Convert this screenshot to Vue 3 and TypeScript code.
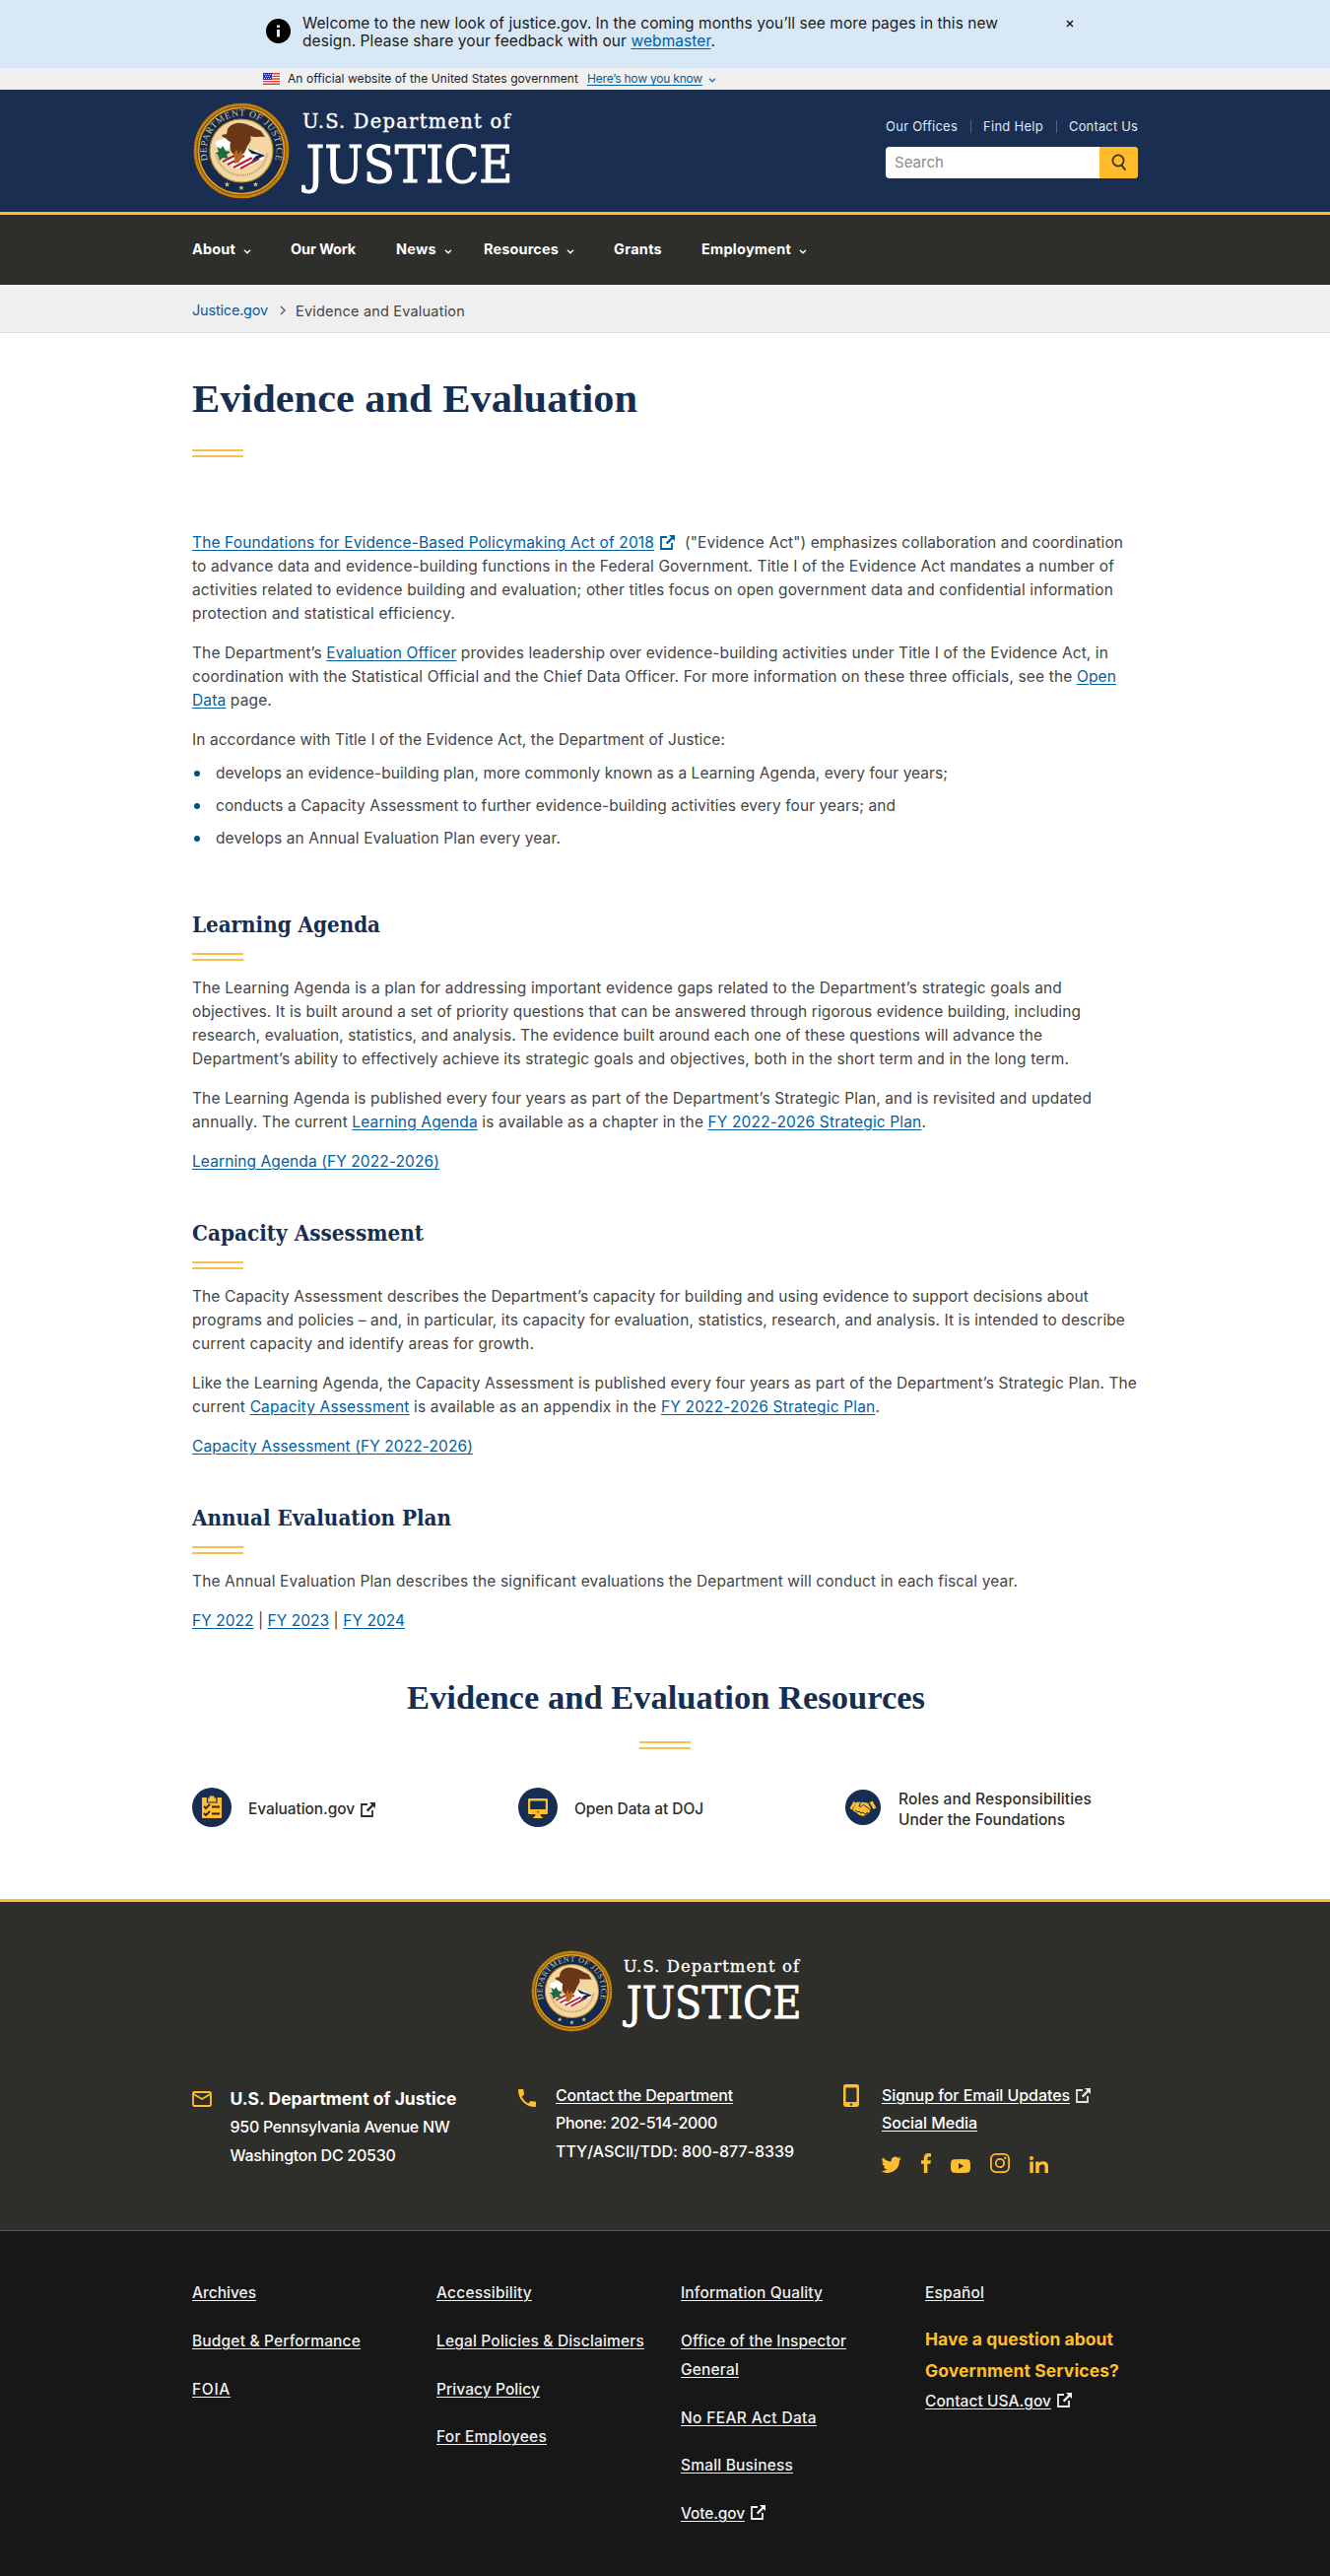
<script setup lang="ts">
import { defineComponent, h, type Directive } from 'vue'

interface Line { t: string; w: number }

/* Tracks (or, with .scale, stretches) a single line of text to a set width. */
const vFit: Directive<HTMLElement, number> = {
  mounted(el, { value, modifiers }) {
    const natural = el.getBoundingClientRect().width
    if (modifiers.scale) {
      el.style.transform = `scaleX(${value / natural})`
    } else {
      const count = (el.textContent ?? '').length || 1
      el.style.letterSpacing = `${(value - natural) / count}px`
    }
  },
}

/* "plain [linked] plain": odd pieces are links. */
const pieces = (s: string): string[] => s.split(/\[(.+?)\]/)

const ExtIcon = defineComponent(() => () =>
  h('svg', { class: 'ext', viewBox: '0 0 15 15', width: 15, height: 15 }, [
    h('path', { d: 'M7 2H1v12h11V8', fill: 'none', stroke: 'currentColor', 'stroke-width': 1.8 }),
    h('path', { d: 'M9 0h6v6l-2.1-2.1-5.5 5.5-1.6-1.6 5.5-5.5z', fill: 'currentColor' }),
  ]),
)

const nav: { t: string; w: number; gap: number; menu: boolean }[] = [
  { t: 'About', w: 44, gap: 40, menu: true },
  { t: 'Our Work', w: 66, gap: 41, menu: false },
  { t: 'News', w: 41, gap: 32, menu: true },
  { t: 'Resources', w: 76, gap: 40, menu: true },
  { t: 'Grants', w: 49, gap: 40, menu: false },
  { t: 'Employment', w: 91, gap: 0, menu: true },
]

const intro: Line[][] = [
  [
    { t: 'to advance data and evidence-building functions in the Federal Government. Title I of the Evidence Act mandates a number of', w: 936 },
    { t: 'activities related to evidence building and evaluation; other titles focus on open government data and confidential information', w: 935 },
    { t: 'protection and statistical efficiency.', w: 267 },
  ],
  [
    { t: 'The Department’s [Evaluation Officer] provides leadership over evidence-building activities under Title I of the Evidence Act, in', w: 930 },
    { t: 'coordination with the Statistical Official and the Chief Data Officer. For more information on these three officials, see the [Open]', w: 938 },
    { t: '[Data] page.', w: 81 },
  ],
  [{ t: 'In accordance with Title I of the Evidence Act, the Department of Justice:', w: 541 }],
]

const duties: Line[] = [
  { t: 'develops an evidence-building plan, more commonly known as a Learning Agenda, every four years;', w: 743 },
  { t: 'conducts a Capacity Assessment to further evidence-building activities every four years; and', w: 690 },
  { t: 'develops an Annual Evaluation Plan every year.', w: 350 },
]

const sections: { title: Line; body: Line[][] }[] = [
  {
    title: { t: 'Learning Agenda', w: 191 },
    body: [
      [
        { t: 'The Learning Agenda is a plan for addressing important evidence gaps related to the Department’s strategic goals and', w: 883 },
        { t: 'objectives. It is built around a set of priority questions that can be answered through rigorous evidence building, including', w: 902 },
        { t: 'research, evaluation, statistics, and analysis. The evidence built around each one of these questions will advance the', w: 863 },
        { t: 'Department’s ability to effectively achieve its strategic goals and objectives, both in the short term and in the long term.', w: 890 },
      ],
      [
        { t: 'The Learning Agenda is published every four years as part of the Department’s Strategic Plan, and is revisited and updated', w: 913 },
        { t: 'annually. The current [Learning Agenda] is available as a chapter in the [FY 2022-2026 Strategic Plan].', w: 745 },
      ],
      [{ t: '[Learning Agenda (FY 2022-2026)]', w: 251 }],
    ],
  },
  {
    title: { t: 'Capacity Assessment', w: 235 },
    body: [
      [
        { t: 'The Capacity Assessment describes the Department’s capacity for building and using evidence to support decisions about', w: 910 },
        { t: 'programs and policies – and, in particular, its capacity for evaluation, statistics, research, and analysis. It is intended to describe', w: 947 },
        { t: 'current capacity and identify areas for growth.', w: 347 },
      ],
      [
        { t: 'Like the Learning Agenda, the Capacity Assessment is published every four years as part of the Department’s Strategic Plan. The', w: 959 },
        { t: 'current [Capacity Assessment] is available as an appendix in the [FY 2022-2026 Strategic Plan].', w: 698 },
      ],
      [{ t: '[Capacity Assessment (FY 2022-2026)]', w: 285 }],
    ],
  },
  {
    title: { t: 'Annual Evaluation Plan', w: 263 },
    body: [
      [{ t: 'The Annual Evaluation Plan describes the significant evaluations the Department will conduct in each fiscal year.', w: 838 }],
      [{ t: '[FY 2022] | [FY 2023] | [FY 2024]', w: 216 }],
    ],
  },
]

const footerLinks: (Line & { ext?: boolean; tight?: boolean })[][] = [
  [{ t: 'Archives', w: 65 }, { t: 'Budget & Performance', w: 171 }, { t: 'FOIA', w: 39 }],
  [
    { t: 'Accessibility', w: 97 },
    { t: 'Legal Policies & Disclaimers', w: 211 },
    { t: 'Privacy Policy', w: 105 },
    { t: 'For Employees', w: 112 },
  ],
  [
    { t: 'Information Quality', w: 144 },
    { t: 'Office of the Inspector', w: 168, tight: true },
    { t: 'General', w: 59 },
    { t: 'No FEAR Act Data', w: 138 },
    { t: 'Small Business', w: 114 },
    { t: 'Vote.gov', w: 65, ext: true },
  ],
]

const logos = { header: 'header', footer: 'footer' } as const

/* Department seal and wordmark, shared by the header and the footer. */
const Brand = defineComponent({
  props: { id: { type: String, required: true } },
  setup(props) {
    const star = (x: number, y: number) =>
      h('path', { d: `M${x} ${y - 2.6}l.8 1.8 2 .1-1.6 1.2.6 2-1.8-1.1-1.8 1.1.6-2-1.6-1.2 2-.1z`, fill: '#d3bd83' })
    return () =>
      h('svg', { class: 'brand', viewBox: '0 0 350 98' }, [
        h('circle', { cx: 49, cy: 49, r: 48.5, fill: '#7a4b12' }),
        h('circle', { cx: 49, cy: 49, r: 46.8, fill: 'none', stroke: '#d9930f', 'stroke-width': 2.6 }),
        h('circle', { cx: 49, cy: 49, r: 46.8, fill: 'none', stroke: '#8f560d', 'stroke-width': 2.6, 'stroke-dasharray': '.7 1.6' }),
        h('circle', { cx: 49, cy: 49, r: 43.6, fill: '#14294b', stroke: '#e29d16', 'stroke-width': 1.8 }),
        h('circle', { cx: 49, cy: 49, r: 32, fill: '#f3d6a0', stroke: '#bb8a2c', 'stroke-width': 1.2 }),
        h('path', { id: `arc-${props.id}`, d: 'M15.5 60.5A35.4 35.4 0 1 1 82.5 60.5', fill: 'none' }),
        h('text', { 'font-size': 9.6, fill: '#d7c795', 'font-family': 'Liberation Serif, serif' }, [
          h('textPath', { href: `#arc-${props.id}`, textLength: 130, startOffset: 2 }, 'DEPARTMENT OF JUSTICE'),
        ]),
        star(34.5, 83), star(49, 86.5), star(63.5, 83),
        h('path', { d: 'M23 51A26.5 26.5 0 0 0 75.5 51', fill: 'none', stroke: '#a78f68', 'stroke-width': 2, 'stroke-dasharray': '.8 1.1' }),
        h('path', { d: 'M22 40l10-4 7-1 2 8-6 5-11-2z', fill: '#fff' }),
        h('path', { d: 'M29 58L64 48 72 57 53 66 43 67z', fill: '#fff' }),
        h('path', { d: 'M30 60l14-7M35 63l17-9M41 66l19-10M48 67l19-10', stroke: '#b22234', 'stroke-width': 2.1 }),
        h('path', { d: 'M24 45l4 2 2-3 3 5 5 1-4 3 2 4-6-1-3 3-2-6-2-2 3-1z', fill: '#1d6b45' }),
        h('path', { d: 'M53 46l20 8-14 6 4-5z', fill: '#12294f' }),
        h('path', { d: 'M54 45l5 7 8 1-7 3-9-7z', fill: '#fff' }),
        h('path', { d: 'M35 27c3-5 9-7 14-6 8 1 13 5 20 8l4 6c-6-1-10 1-15-1 2 4-1 7-3 10-1 4-3 8-7 10l-6-1c-5-3-5-8-4-13-3-1-4-4-8-5l-1-2 5-1z', fill: '#6b3719' }),
        h('path', { d: 'M42 52l2-5 2 6 3-5 1 8-4 5-4 1z', fill: '#b8681e' }),
        h('g', { fill: '#fff', stroke: '#fff', 'font-family': 'DejaVu Serif Condensed, DejaVu Serif, serif' }, [
          h('text', { x: 111, y: 26, 'font-size': 20.5, 'stroke-width': 0.35, textLength: 212, lengthAdjust: 'spacingAndGlyphs', 'letter-spacing': 1.2 }, 'U.S. Department of'),
          h('text', { x: 114.5, y: 81, 'font-size': 52.5, 'stroke-width': 0.9, textLength: 210, lengthAdjust: 'spacingAndGlyphs' }, 'JUSTICE'),
        ]),
      ])
  },
})
</script>

<template>
  <div class="page">
    <div class="alert">
      <svg class="info" viewBox="0 0 25 25" width="25" height="25"><circle cx="12.5" cy="12.5" r="12.5" fill="#000" /><path d="M11 6.5h3v2.6h-3zM11 11h3v7.5h-3z" fill="#d9e8f6" /></svg>
      <div class="alert-text">
        <div><span v-fit="706" class="fit">Welcome to the new look of justice.gov. In the coming months you’ll see more pages in this new</span></div>
        <div><span v-fit="419" class="fit">design. Please share your feedback with our <a>webmaster</a>.</span></div>
      </div>
      <svg class="close" viewBox="0 0 8 8" width="8" height="8"><path d="M1 1l6 6M7 1L1 7" stroke="#1b1b1b" stroke-width="1.5" /></svg>
    </div>

    <div class="gov">
      <svg class="flag" viewBox="0 0 17 12" width="17" height="12"><path fill="#fff" d="M0 0h17v12H0z" /><path d="M0 .8h17M0 3.4h17M0 6h17M0 8.6h17M0 11.2h17" stroke="#db3e1f" stroke-width="1.4" /><path fill="#2a2fb5" d="M0 0h9v7H0z" /><path d="M1 1.5h7M2 3.5h6M1 5.5h7" stroke="#fff" stroke-width=".8" stroke-dasharray="1 1" /></svg>
      <span v-fit="295" class="fit">An official website of the United States government</span>
      <a class="how"><span v-fit="117" class="fit">Here’s how you know</span></a>
      <svg class="chev" viewBox="0 0 8 5" width="8" height="5"><path d="M1 .8l3 3 3-3" fill="none" stroke="#3a7099" stroke-width="1.5" /></svg>
    </div>

    <header class="header">
      <div class="wrap header-row">
        <Brand :id="logos.header" class="brand-top" />
        <div class="tools">
          <div class="quick">
            <span v-fit="73" class="fit">Our Offices</span><i></i><span v-fit="61" class="fit">Find Help</span><i></i><span v-fit="70" class="fit">Contact Us</span>
          </div>
          <div class="search">
            <div class="field"><span v-fit="50" class="fit">Search</span></div>
            <div class="go"><svg viewBox="0 0 16 18" width="16" height="18"><circle cx="7" cy="7" r="5.6" fill="none" stroke="#3a2f0c" stroke-width="1.7" /><path d="M10 11l4.3 5.6" stroke="#3a2f0c" stroke-width="1.9" /></svg></div>
          </div>
        </div>
      </div>
    </header>

    <nav class="nav">
      <div class="wrap nav-row">
        <div v-for="n in nav" :key="n.t" class="nav-item" :style="{ marginRight: n.gap + 'px' }">
          <span v-fit="n.w" class="fit">{{ n.t }}</span>
          <svg v-if="n.menu" viewBox="0 0 8 5" width="8" height="5"><path d="M1 .8l3 3 3-3" fill="none" stroke="#fff" stroke-width="1.4" /></svg>
        </div>
      </div>
    </nav>

    <div class="crumbs">
      <div class="wrap crumb-row">
        <a><span v-fit="77" class="fit">Justice.gov</span></a>
        <svg viewBox="0 0 6 10" width="6" height="10"><path d="M1 1l4 4-4 4" fill="none" stroke="#565c65" stroke-width="1.4" /></svg>
        <span class="here"><span v-fit="172" class="fit">Evidence and Evaluation</span></span>
      </div>
    </div>

    <main class="wrap main">
      <h1><span v-fit.scale="452" class="fit">Evidence and Evaluation</span></h1>
      <div class="rule"></div>

      <div class="copy intro">
        <p>
          <span class="line lead"><a><span v-fit="469" class="fit">The Foundations for Evidence-Based Policymaking Act of 2018</span></a><ExtIcon /><span v-fit="445" class="fit">("Evidence Act") emphasizes collaboration and coordination</span></span>
          <span v-for="l in intro[0]" :key="l.t" class="line"><span v-fit="l.w" class="fit"><template v-for="(s, i) in pieces(l.t)" :key="i"><a v-if="i % 2">{{ s }}</a><template v-else>{{ s }}</template></template></span></span>
        </p>
        <p v-for="(p, k) in intro.slice(1)" :key="k">
          <span v-for="l in p" :key="l.t" class="line"><span v-fit="l.w" class="fit"><template v-for="(s, i) in pieces(l.t)" :key="i"><a v-if="i % 2">{{ s }}</a><template v-else>{{ s }}</template></template></span></span>
        </p>
        <ul>
          <li v-for="d in duties" :key="d.t"><b></b><span v-fit="d.w" class="fit">{{ d.t }}</span></li>
        </ul>
      </div>

      <section v-for="s in sections" :key="s.title.t" class="section">
        <h2><span v-fit.scale="s.title.w" class="fit">{{ s.title.t }}</span></h2>
        <div class="rule"></div>
        <div class="copy">
          <p v-for="(p, k) in s.body" :key="k">
            <span v-for="l in p" :key="l.t" class="line"><span v-fit="l.w" class="fit"><template v-for="(x, i) in pieces(l.t)" :key="i"><a v-if="i % 2">{{ x }}</a><template v-else>{{ x }}</template></template></span></span>
          </p>
        </div>
      </section>

      <h3><span v-fit.scale="526" class="fit">Evidence and Evaluation Resources</span></h3>
      <div class="rule centered"></div>

      <div class="cards">
        <div class="card">
          <svg viewBox="0 0 40 40" width="40" height="40"><circle cx="20" cy="20" r="20" fill="#162e51" /><path d="M10 10h20v21H10z" fill="#ffbe2e" /><path d="M17 8h6v2h2v5h-9.500v-5H17z" fill="#ffbe2e" stroke="#162e51" stroke-width="1.2" /><path d="M12 19l2 2 4-4M12 26l2 2 4-4" fill="none" stroke="#3c1c12" stroke-width="1.8" /><path d="M20 19.500h8M20 26.500h8" stroke="#3c1c12" stroke-width="1.8" /></svg>
          <span class="card-text"><span v-fit="108" class="fit">Evaluation.gov</span><ExtIcon /></span>
        </div>
        <div class="card">
          <svg viewBox="0 0 40 40" width="40" height="40"><circle cx="20" cy="20" r="20" fill="#162e51" /><path d="M11.200 12.200h17.600v13.600H11.200z" fill="#ffbe2e" stroke="#ffbe2e" stroke-width="2.400" stroke-linejoin="round" /><path d="M12.200 13.500h15.600v8.500H12.200z" fill="#162e51" /><circle cx="20" cy="24.500" r="1" fill="#7b5b10" /><path d="M17.500 27h5l.5 2 2.500 2h-11l2.500-2z" fill="#ffbe2e" /></svg>
          <span class="card-text"><span v-fit="131" class="fit">Open Data at DOJ</span></span>
        </div>
        <div class="card roles">
          <svg viewBox="0 0 36 36" width="36" height="36"><circle cx="18" cy="18" r="18" fill="#162e51" /><path d="M8.500 12l-4 7 2.500 1.500 4-7z" fill="#ffbe2e" /><path d="M27.500 11.500l4 7-3 1.500-4-7z" fill="#ffbe2e" /><path d="M11 13l5-.8 7 1.300 3 6-1.500 3.500-6 4-4-1-7-5z" fill="#ffbe2e" /><path d="M23 13l-7-1-2 5c2 1 3-.5 4.500-1.800L26 21M10 21l3 2 1-1 2 2 2-1 2 2 3-2" fill="none" stroke="#162e51" stroke-width="1" /></svg>
          <span class="card-text two"><span v-fit="196" class="fit">Roles and Responsibilities</span><span v-fit="169" class="fit">Under the Foundations</span></span>
        </div>
      </div>
    </main>

    <footer>
      <div class="foot-top">
        <div class="wrap">
          <Brand :id="logos.footer" class="brand-foot" />
          <div class="contact">
            <div class="c1">
              <svg viewBox="0 0 20 16" width="20" height="16"><rect x="1" y="1" width="18" height="14" rx="1.200" fill="none" stroke="#ffbe2e" stroke-width="1.800" /><path d="M1.500 3l8.500 5 8.500-5" fill="none" stroke="#ffbe2e" stroke-width="1.800" /></svg>
              <div class="lines">
                <div class="name"><span v-fit="230" class="fit">U.S. Department of Justice</span></div>
                <div><span v-fit="223" class="fit">950 Pennsylvania Avenue NW</span></div>
                <div><span v-fit="168" class="fit">Washington DC 20530</span></div>
              </div>
            </div>
            <div class="c2">
              <svg viewBox="0 0 18 18" width="18" height="18"><path d="M3.620 7.790a15.150 15.150 0 0 0 6.590 6.590l2.200-2.200c.27-.27.67-.36 1.020-.24 1.120.37 2.330.57 3.570.57.550 0 1 .45 1 1V17c0 .55-.45 1-1 1C7.610 18 0 10.390 0 1c0-.55.450-1 1-1h3.500c.55 0 1 .45 1 1 0 1.250.200 2.450.570 3.570.110.350.030.740-.250 1.020z" fill="#ffbe2e" /></svg>
              <div class="lines">
                <div><u><span v-fit="180" class="fit">Contact the Department</span></u></div>
                <div><span v-fit="164" class="fit">Phone: 202-514-2000</span></div>
                <div><span v-fit="242" class="fit">TTY/ASCII/TDD: 800-877-8339</span></div>
              </div>
            </div>
            <div class="c3">
              <svg viewBox="0 0 16 23" width="16" height="23"><rect width="16" height="23" rx="2.400" fill="#ffbe2e" /><path d="M2.500 3.500h11v14.500h-11z" fill="#2e2e2a" /><circle cx="8" cy="20.500" r="1.200" fill="#2e2e2a" /></svg>
              <div class="lines">
                <div><u><span v-fit="191" class="fit">Signup for Email Updates</span></u><ExtIcon /></div>
                <div><u><span v-fit="97" class="fit">Social Media</span></u></div>
                <div class="social">
                  <svg viewBox="2 3.500 20.500 17.500" width="20" height="17"><path fill="#ffbe2e" d="M22.460 6c-.77.350-1.600.580-2.460.690a4.300 4.300 0 0 0 1.880-2.380c-.83.500-1.750.850-2.720 1.050A4.280 4.280 0 0 0 11.870 9.270 12.160 12.160 0 0 1 3.050 4.800a4.280 4.280 0 0 0 1.330 5.710 4.200 4.200 0 0 1-1.940-.54v.050a4.280 4.280 0 0 0 3.430 4.190 4.200 4.200 0 0 1-1.930.070 4.280 4.280 0 0 0 4 2.970A8.600 8.600 0 0 1 1.640 19 12.130 12.130 0 0 0 20.340 8.200c.84-.6 1.560-1.360 2.120-2.200z" /></svg>
                  <svg viewBox="0 0 10 20" width="10" height="20"><path fill="#ffbe2e" d="M10 .2v3.200H8.100c-1.400 0-1.700.7-1.700 1.700V7.300H9.900L9.400 10.800H6.400V20H2.800V10.800H0V7.300h2.800V4.700C2.800 1.700 4.600 0 7.300 0 8.600 0 9.700.1 10 .2z" /></svg>
                  <svg viewBox="0 0 20 14" width="20" height="14"><path fill="#ffbe2e" fill-rule="evenodd" d="M3 .3Q10-.3 17 .3q2.500.2 2.800 3 .4 3.700 0 7.400-.3 2.800-2.800 3-7 .6-14 0-2.500-.2-2.800-3-.4-3.700 0-7.400Q.5.500 3 .3zM8 4v6l5.200-3z" /></svg>
                  <svg viewBox="0 0 20 20" width="20" height="20"><rect x=".9" y=".9" width="18.200" height="18.200" rx="5" fill="none" stroke="#ffbe2e" stroke-width="1.800" /><circle cx="10" cy="10" r="4.200" fill="none" stroke="#ffbe2e" stroke-width="1.800" /><circle cx="15.300" cy="4.700" r="1.200" fill="#ffbe2e" /></svg>
                  <svg viewBox="0 0 19 17" width="19" height="17"><path fill="#ffbe2e" d="M.3 5.500h3.500V17H.3zM6.200 5.500h3.400v1.600c.7-1.100 1.900-1.900 3.800-1.900C17.400 5.200 19 7 19 10.300V17h-3.500v-6c0-1.700-.5-2.800-2.200-2.800-1.900 0-3.500 1-3.500 3.200V17H6.200z" /><circle cx="2" cy="2" r="2" fill="#ffbe2e" /></svg>
                </div>
              </div>
            </div>
          </div>
        </div>
      </div>
      <div class="foot-bottom">
        <div class="wrap cols">
          <div v-for="(c, k) in footerLinks" :key="k" class="col">
            <div v-for="l in c" :key="l.t" :class="['fl', { tight: l.tight }]"><u><span v-fit="l.w" class="fit">{{ l.t }}</span></u><ExtIcon v-if="l.ext" /></div>
          </div>
          <div class="col last">
            <div class="fl"><u><span v-fit="60" class="fit">Español</span></u></div>
            <div class="ask"><span v-fit="191" class="fit">Have a question about</span></div>
            <div class="ask"><span v-fit="197" class="fit">Government Services?</span></div>
            <div class="fl"><u><span v-fit="128" class="fit">Contact USA.gov</span></u><ExtIcon /></div>
          </div>
        </div>
      </div>
    </footer>
  </div>
</template>

<style>
body { margin: 0; background: #fff; }
</style>

<style scoped>
* { box-sizing: border-box; }
.page { width: 1350px; height: 2614px; overflow: hidden; font-family: Inter, Roboto, "Liberation Sans", sans-serif; font-size: 15.5px; color: #454545; }
.wrap { width: 960px; margin: 0 auto; }
.fit { display: inline-block; white-space: pre; transform-origin: 0 50%; text-decoration: inherit; }
a { color: #005ea2; text-decoration: underline; text-underline-offset: 2px; text-decoration-thickness: 1px; }
u { text-decoration: underline; text-underline-offset: 2px; text-decoration-thickness: 1px; }
svg { display: block; flex: none; }

.alert { display: flex; height: 69px; padding: 15px 0 0 269.5px; background: #d9e8f6; color: #1b1b1b; }
.info { margin-top: 3.5px; }
.alert-text { flex: none; width: 787.5px; padding-left: 12.5px; line-height: 18px; font-size: 15.5px; }
.alert-text > div { height: 18px; }
.close { margin: 5px 0 0; }
.gov { display: flex; height: 22px; padding-left: 266.5px; background: #f0f0f0; color: #1b1b1b; font-size: 12px; line-height: 22px; }
.flag { margin: 4.5px 8.5px 0 0; }
.how { margin: 0 6px 0 9px; }
.chev { margin-top: 9.5px; }

.header { height: 127px; background: #1a2e51; border-bottom: 3px solid #ffbe2e; }
.header-row { display: flex; justify-content: space-between; }
.brand-top { width: 350px; height: 98px; margin: 13px 0 0 .5px; }
.tools { width: 256px; padding-top: 27px; }
.quick { display: flex; justify-content: space-between; align-items: center; height: 20px; font-size: 13px; color: #dfe9f7; line-height: 20px; }
.quick i { width: 1px; height: 13px; background: #4f6689; }
.search { display: flex; height: 32px; margin-top: 11px; border-radius: 4px; overflow: hidden; background: #fff; }
.field { flex: 1; padding-left: 9px; font-size: 15px; line-height: 31px; color: #8a8a8a; }
.go { width: 39px; padding: 7px 0 0 12px; background: #ffbc2a; }

.nav { height: 71px; background: #2e2e2a; color: #fff; }
.nav-row { display: flex; font-size: 14.5px; font-weight: 700; line-height: 20px; padding-top: 25px; }
.nav-item { display: flex; align-items: center; gap: 8px; }
.nav-item svg { margin-top: 4px; }
.crumbs { height: 49px; background: #efefef; border-top: 2px solid #fafafa; border-bottom: 1px solid #dfe1e2; font-size: 14.5px; }
.crumb-row { display: flex; line-height: 20px; padding-top: 14px; }
.crumb-row a { text-decoration: none; }
.crumb-row svg { margin: 5px 10px 0 12px; }
.here { padding-top: 1px; }

.main { height: 1589px; }
h1, h2, h3, p, ul { margin: 0; padding: 0; }
h1 { padding-top: 41px; height: 91px; font: 700 41px/50px "Liberation Serif", serif; color: #162e51; }
h1 + .rule { margin-top: 27px; }
.rule { width: 52px; height: 8px; border-top: 2px solid #f6c04a; border-bottom: 2px solid #f6c04a; }
.rule.centered { margin: 24px auto 0; }
.copy p { margin-bottom: 16px; }
.line { display: flex; height: 24px; line-height: 24px; }
.lead .ext { margin: 4px 10px 0 6px; color: #005ea2; }
.intro { padding-top: 75px; height: 398px; }
.intro p:last-of-type { margin-bottom: 10px; }
li { display: flex; align-items: center; height: 24px; margin-bottom: 9px; line-height: 24px; }
li b { width: 6px; height: 6px; margin: 0 16px 0 2px; border-radius: 50%; background: #005282; }
.section { margin-bottom: 29px; }
.intro + .section { padding-top: 61px; }
.section h2 { height: 30px; font: 700 23px/30px "DejaVu Serif", serif; color: #162e51; }
.section .rule { margin: 14px 0 16px; }
.section .copy { display: flow-root; }
h3 { width: 526px; height: 40px; font: 700 33px/40px "Liberation Serif", serif; color: #162e51; white-space: nowrap; }
.section + h3 { margin: 30px auto 0; padding-left: 1px; }
.cards { display: flex; margin-top: 39px; height: 40px; color: #2e2e2a; font-weight: 500; }
.card { display: flex; flex: none; width: 331px; }
.card-text { display: flex; margin: 10px 0 0 17px; line-height: 24px; height: 24px; }
.card-text .ext { margin: 5px 0 0 6px; }
.roles svg { margin: 2px 0 0 1px; }
.card-text.two { flex-direction: column; align-items: flex-start; margin: 1px 0 0 18px; line-height: 21px; }

.foot-top { height: 337px; background: #2e2e2a; border-top: 3px solid #f6c22f; border-bottom: 1px solid #565656; color: #fff; }
.brand-foot { width: 296px; height: 83px; margin: 49px 0 0 344px; }
.contact { display: flex; font-weight: 500; font-size: 16px; }
.contact > div { display: flex; flex: none; width: 331px; padding-top: 51px; }
.lines > div { display: flex; height: 29px; line-height: 29px; }
.c1 > svg { margin-top: 8.5px; }
.c1 .lines { margin: 1.5px 0 0 18.5px; }
.c1 .name { font-size: 17.5px; font-weight: 700; }
.c2 > svg { margin-top: 7px; }
.c2 .lines { margin: -1.5px 0 0 20px; }
.c2 .lines > div:first-child, .c3 .lines > div:first-child { height: 28px; }
.c3 > svg { margin: 2px 0 0 -1px; }
.c3 .lines { margin: -1.5px 0 0 23px; }
.c3 .ext { margin: 7px 0 0 6px; color: #e4e6dc; }
.lines > .social { align-items: flex-end; gap: 20px; height: 36px; }
.foot-bottom { height: 350px; background: #171717; color: #f0f0f0; font-weight: 500; }
.cols { display: flex; padding-top: 48px; }
.col { flex: none; width: 248px; }
.fl { display: flex; height: 29px; line-height: 29px; margin-bottom: 19.8px; }
.fl.tight { margin-bottom: 0; }
.fl .ext { margin: 6px 0 0 6px; }
.ask { height: 32px; line-height: 32px; font-size: 17.5px; font-weight: 700; color: #ffbe2e; }
.last .fl:first-child { margin-bottom: 17px; }
</style>
